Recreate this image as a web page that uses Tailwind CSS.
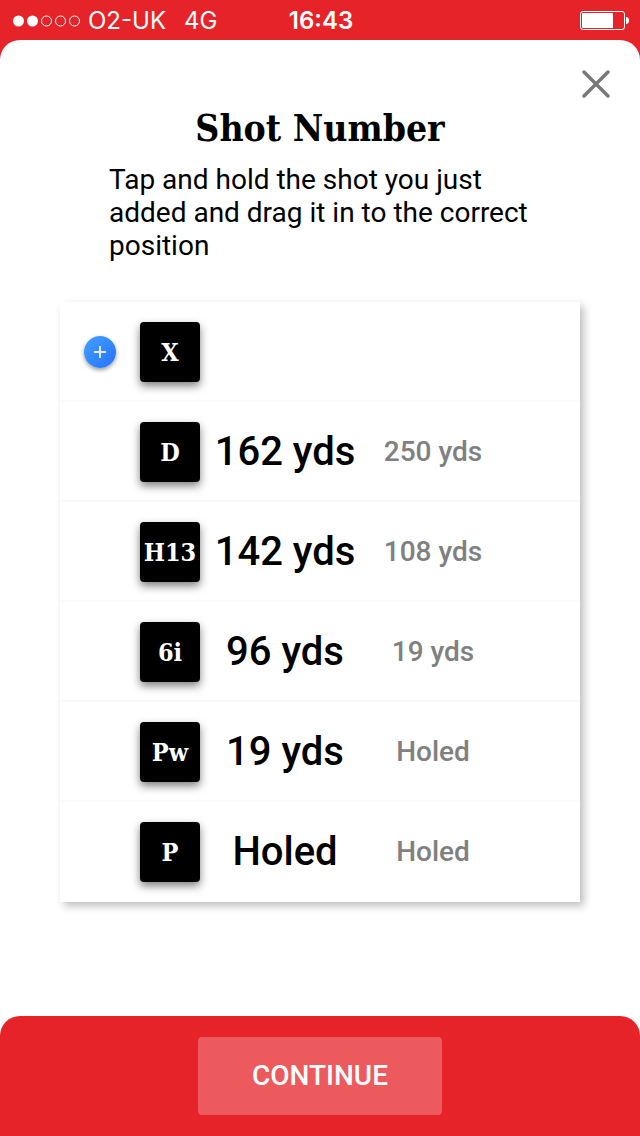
<!DOCTYPE html>
<html lang="en">

<head>
    <meta charset="UTF-8">
    <meta name="viewport" content="width=device-width, initial-scale=1.0">
    <title>Shot Number</title>
    <script src="https://cdn.jsdelivr.net/npm/@tailwindcss/browser@4"></script>
</head>

<body class="min-h-screen flex flex-col bg-[#e62329] font-['Roboto',sans-serif] text-black">

    <!-- status bar -->
    <div class="h-10 grid grid-cols-[1fr_auto_1fr] items-center pt-0.5 pl-3 pr-[10px] text-white text-2xl font-['Inter',sans-serif]">
        <div class="flex items-center">
            <svg class="w-[70px] h-3 mr-[6px]" viewBox="0 0 70 12" fill="none" stroke="#fff">
                <circle cx="6.500" cy="6" r="5.500" fill="#fff" stroke="none" />
                <circle cx="20.500" cy="6" r="5.500" fill="#fff" stroke="none" />
                <circle cx="34.500" cy="6" r="5" />
                <circle cx="48.500" cy="6" r="5" />
                <circle cx="62.500" cy="6" r="5" />
            </svg>
            <span>O2-UK</span>
            <span class="ml-[18px]">4G</span>
        </div>
        <span class="font-semibold">16:43</span>
        <svg class="w-[50px] h-5 justify-self-end" viewBox="0 0 50 20">
            <rect x="0.500" y="0.500" width="44" height="18" rx="2.500" fill="none" stroke="#fff" />
            <rect x="2" y="2" width="31" height="15" rx="1" fill="#fff" />
            <path d="M46 6c2 0 3 1.500 3 3.500s-1 3.500-3 3.500z" fill="#fff" />
        </svg>
    </div>

    <main class="flex-1 flex flex-col bg-white rounded-t-[20px]">
        <div class="flex justify-end pt-7 pr-7">
            <button type="button" aria-label="Close" class="w-8 h-8">
                <svg class="w-8 h-8" viewBox="0 0 32 32" fill="none" stroke="#777" stroke-width="3.500" stroke-linecap="round">
                    <path d="M4 4l24 24M28 4l-24 24" />
                </svg>
            </button>
        </div>

        <h1 class="h-12 mt-1 text-center text-[37px] leading-12 font-bold font-['Roboto_Slab','DejaVu_Serif_Condensed','DejaVu_Serif',serif]">Shot Number</h1>
        <p class="mx-[109px] mt-[11px] text-[28px] leading-[33px]">Tap and hold the shot you just added and drag it in to the correct position</p>

        <ol class="mx-[60px] mt-10 shadow-[4px_4px_8px_rgba(0,0,0,0.25)]">
            <li class="h-[100px] grid grid-cols-[80px_60px_170px_126px] items-center pt-0.5 border-b-2 border-[#fafafa] text-center">
                <span class="w-8 h-8 mx-auto rounded-full bg-linear-to-br from-[#44a0ff] to-[#2a70ff] shadow-[0_2px_4px_rgba(0,0,0,0.4)]">
                    <svg class="w-8 h-8" viewBox="0 0 32 32" stroke="#dcebff" stroke-width="2">
                        <path d="M10 16h12M16 10v12" />
                    </svg>
                </span>
                <span class="h-[60px] rounded bg-black text-white text-[25px] leading-[62px] font-bold font-['Roboto_Slab','DejaVu_Serif_Condensed','DejaVu_Serif',serif] shadow-[0_4px_8px_rgba(0,0,0,0.5)]">X</span>
            </li>
            <li class="h-[100px] grid grid-cols-[80px_60px_170px_126px] items-center pt-0.5 border-b-2 border-[#fafafa] text-center">
                <span class="col-start-2 h-[60px] rounded bg-black text-white text-[25px] leading-[62px] font-bold font-['Roboto_Slab','DejaVu_Serif_Condensed','DejaVu_Serif',serif] shadow-[0_4px_8px_rgba(0,0,0,0.5)]">D</span>
                <span class="text-[40px] font-medium">162 yds</span>
                <span class="text-[28px] font-medium text-[#808080]">250 yds</span>
            </li>
            <li class="h-[100px] grid grid-cols-[80px_60px_170px_126px] items-center pt-0.5 border-b-2 border-[#fafafa] text-center">
                <span class="col-start-2 h-[60px] rounded bg-black text-white text-[25px] leading-[62px] font-bold font-['Roboto_Slab','DejaVu_Serif_Condensed','DejaVu_Serif',serif] shadow-[0_4px_8px_rgba(0,0,0,0.5)]">H13</span>
                <span class="text-[40px] font-medium">142 yds</span>
                <span class="text-[28px] font-medium text-[#808080]">108 yds</span>
            </li>
            <li class="h-[100px] grid grid-cols-[80px_60px_170px_126px] items-center pt-0.5 border-b-2 border-[#fafafa] text-center">
                <span class="col-start-2 h-[60px] rounded bg-black text-white text-[25px] leading-[62px] font-bold font-['Roboto_Slab','DejaVu_Serif_Condensed','DejaVu_Serif',serif] shadow-[0_4px_8px_rgba(0,0,0,0.5)]">6i</span>
                <span class="text-[40px] font-medium">96 yds</span>
                <span class="text-[28px] font-medium text-[#808080]">19 yds</span>
            </li>
            <li class="h-[100px] grid grid-cols-[80px_60px_170px_126px] items-center pt-0.5 border-b-2 border-[#fafafa] text-center">
                <span class="col-start-2 h-[60px] rounded bg-black text-white text-[25px] leading-[62px] font-bold font-['Roboto_Slab','DejaVu_Serif_Condensed','DejaVu_Serif',serif] shadow-[0_4px_8px_rgba(0,0,0,0.5)]">Pw</span>
                <span class="text-[40px] font-medium">19 yds</span>
                <span class="text-[28px] font-medium text-[#808080]">Holed</span>
            </li>
            <li class="h-[100px] grid grid-cols-[80px_60px_170px_126px] items-center pt-0.5 border-b-2 border-transparent text-center">
                <span class="col-start-2 h-[60px] rounded bg-black text-white text-[25px] leading-[62px] font-bold font-['Roboto_Slab','DejaVu_Serif_Condensed','DejaVu_Serif',serif] shadow-[0_4px_8px_rgba(0,0,0,0.5)]">P</span>
                <span class="text-[40px] font-medium">Holed</span>
                <span class="text-[28px] font-medium text-[#808080]">Holed</span>
            </li>
        </ol>
    </main>

    <footer class="bg-white">
        <div class="h-[120px] flex items-center justify-center bg-[#e62329] rounded-t-[20px]">
            <button type="button" class="w-[244px] h-[78px] rounded bg-white/25 text-white text-[28px] font-medium">CONTINUE</button>
        </div>
    </footer>

</body>

</html>
